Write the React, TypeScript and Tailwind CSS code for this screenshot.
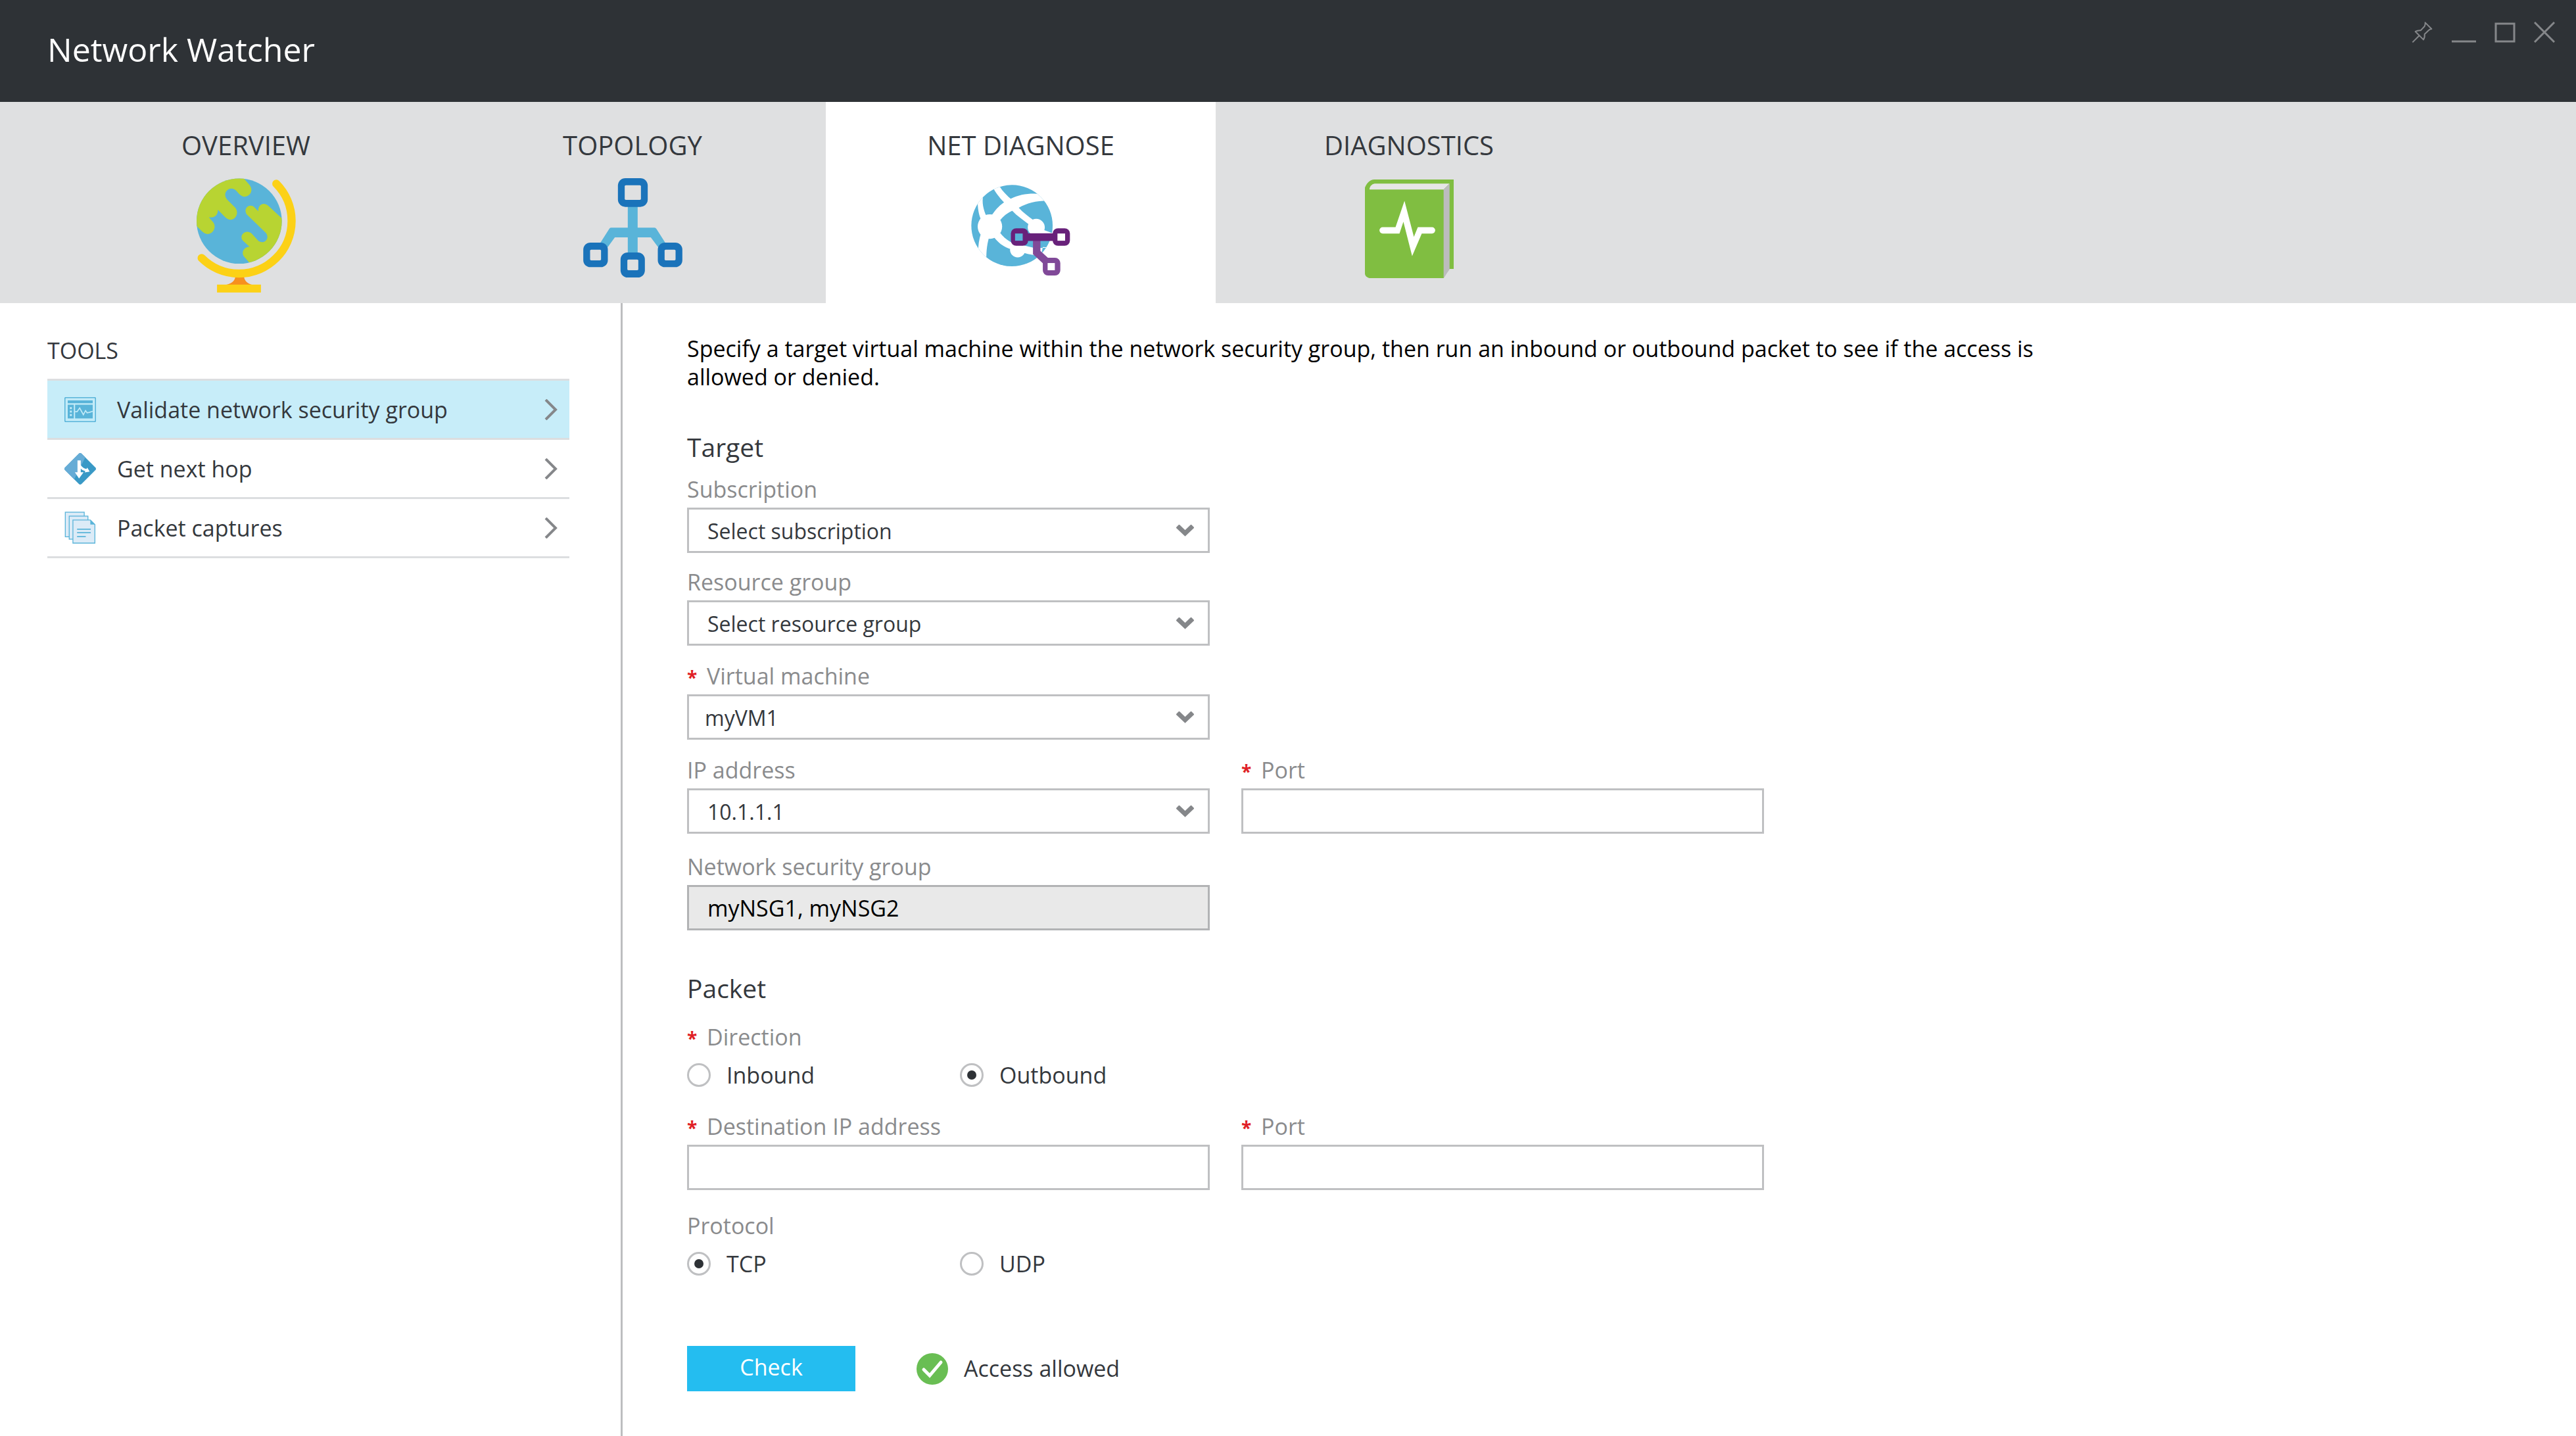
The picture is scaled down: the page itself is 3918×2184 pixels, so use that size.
import { useId, useState, type ReactNode } from "react";

const ICON_BLUE = "#59b4d9";

function GlobeIcon() {
  return (
    <svg viewBox="87 62 452 520" className="h-[174px] w-[151px]" aria-hidden="true">
      <defs>
        <clipPath id="globe-clip">
          <circle cx="281" cy="257" r="194" />
        </clipPath>
      </defs>
      <circle cx="281" cy="257" r="194" fill={ICON_BLUE} />
      <g clipPath="url(#globe-clip)" fill="#b8d432">
        <path d="M300 50 L305 66 L328 92 C348 118 330 145 305 146 C295 146 288 140 280 133 L268 119 C258 108 238 103 225 118 C213 132 216 147 226 159 L262 195 C280 214 270 248 243 251 C232 251 224 245 217 239 L184 205 C184 227 172 243 143 240 L160 259 C180 280 165 315 138 316 C126 315 120 311 113 305 L80 272 L60 60 Z" />
        <path d="M490 260 L475 244 L412 186 C392 168 366 182 368 212 L350 194 C330 174 297 198 315 226 L401 309 C424 334 395 366 368 347 L338 314 C312 290 277 322 298 346 L328 374 C300 375 288 403 305 421 L335 455 L420 460 L500 350 Z" />
      </g>
      <path d="M263 510 H303 C305 530 320 544 345 548 H215 C245 544 262 530 263 510 Z" fill="#f7901e" />
      <path d="M450 87 A239 239 0 0 1 110 425" fill="none" stroke="#fcd116" strokeWidth="37" strokeLinecap="round" />
      <rect x="180" y="546" width="200" height="36" fill="#fcd116" />
    </svg>
  );
}

function TopologyIcon() {
  return (
    <svg viewBox="46 36 452 453" className="h-[151px] w-[151px]" aria-hidden="true">
      <rect x="249" y="160" width="45" height="225" fill={ICON_BLUE} />
      <path d="M122 334 L165 266 Q168 262 174 262 H371 Q376 262 380 268 L422 334 L390 354 L354 306 H190 L155 354 Z" fill={ICON_BLUE} />
      <g fill="#1a73ba">
        <rect x="204" y="36" width="136" height="131" rx="34" />
        <rect x="46" y="330" width="112" height="112" rx="32" />
        <rect x="216" y="375" width="111" height="114" rx="32" />
        <rect x="386" y="330" width="112" height="112" rx="32" />
      </g>
      <g fill="#dfe0e1">
        <rect x="235" y="68" width="74" height="67" rx="5" />
        <rect x="77" y="362" width="50" height="49" rx="5" />
        <rect x="247" y="407" width="50" height="49" rx="5" />
        <rect x="417" y="362" width="50" height="49" rx="5" />
      </g>
    </svg>
  );
}

function NetDiagnoseIcon() {
  return (
    <svg viewBox="53 65 452 415" className="h-[138px] w-[151px]" aria-hidden="true">
      <defs>
        <clipPath id="net-clip">
          <circle cx="239" cy="252" r="186" />
        </clipPath>
      </defs>
      <circle cx="239" cy="252" r="186" fill={ICON_BLUE} />
      <g clipPath="url(#net-clip)" fill="#ffffff">
        <circle cx="138" cy="256" r="56" />
        <circle cx="350" cy="260" r="39" />
        <circle cx="265" cy="362" r="35" />
        <path d="M140 215 C170 165 205 140 235 128 C280 106 340 100 400 112 L400 138 C350 138 305 150 270 170 C235 184 205 200 186 226 Z" />
        <path d="M150 75 L180 68 C196 96 214 112 234 130 L270 170 C290 192 312 208 336 226 L316 246 C290 226 262 208 240 184 L206 150 C186 128 168 108 150 75 Z" />
        <path d="M82 140 L108 112 C100 145 108 178 122 208 L98 226 C86 200 82 170 82 140 Z" />
        <path d="M98 284 L136 300 C126 330 121 365 122 410 L84 380 C84 345 88 315 98 284 Z" />
        <path d="M158 306 L186 286 C202 308 222 322 246 334 L234 360 C202 350 176 330 158 306 Z" />
        <path d="M290 342 L340 354 H440 L380 350 L372 388 C345 388 318 384 292 376 Z" />
        <path d="M372 276 L384 272 L440 292 V300 H372 Z" />
      </g>
      <path d="M352 318 V375 L400 419" fill="none" stroke="#804998" strokeWidth="34" />
      <rect x="380" y="399" width="80" height="81" rx="24" fill="#804998" />
      <rect x="402" y="423" width="33" height="33" fill="#ffffff" />
      <g fill="#68217a">
        <rect x="290" y="287" width="150" height="35" />
        <rect x="234" y="264" width="79" height="80" rx="24" />
        <rect x="425" y="264" width="79" height="80" rx="24" />
      </g>
      <rect x="253" y="288" width="35" height="33" fill={ICON_BLUE} />
      <rect x="447" y="288" width="35" height="33" fill="#ffffff" />
    </svg>
  );
}

function DiagnosticsIcon() {
  return (
    <svg viewBox="41 41 406 451" className="h-[150px] w-[135px]" aria-hidden="true">
      <path d="M41 78 C50 58 62 41 85 41 H447 V450 H425 L401 492 H62 C48 488 41 480 41 470 Z" fill="#80be41" />
      <path d="M62 82 C66 68 76 60 90 60 H428 L401 87 H66 C62 87 62 85 62 82 Z" fill="#e6e6e6" />
      <path d="M428 60 V452 L401 491 V87 Z" fill="#bcbcbe" />
      <path d="M122 259 H181 L222 139 L265 303 L283 259 H348 A14 14 0 0 1 348 288 H301 L257 391 L217 234 L199 288 H122 A14 14 0 0 1 122 259 Z" fill="#ffffff" />
    </svg>
  );
}

function ValidateIcon() {
  return (
    <svg viewBox="53 66 145 115" className="h-[38px] w-12" aria-hidden="true">
      <rect x="55" y="68" width="141" height="111" rx="5" fill="#c3ebf8" stroke={ICON_BLUE} strokeWidth="5" />
      <rect x="68" y="81" width="115" height="13" fill={ICON_BLUE} />
      <rect x="68" y="101" width="28" height="63" fill={ICON_BLUE} />
      <rect x="102" y="101" width="81" height="63" fill={ICON_BLUE} />
      <g fill="#c3ebf8">
        <rect x="78" y="112" width="9" height="9" />
        <rect x="78" y="128" width="9" height="9" />
        <rect x="78" y="144" width="9" height="9" />
      </g>
      <polyline points="102,133 111,133 123,116 140,147 150,128 157,138 168,136 183,131" fill="none" stroke="#c3ebf8" strokeWidth="5" />
    </svg>
  );
}

function NextHopIcon() {
  return (
    <svg viewBox="53 326 145 145" className="size-12" aria-hidden="true">
      <path d="M120 328 Q125 324 131 328 L196 393 Q200 399 196 404 L131 469 Q125 473 120 469 L55 404 Q51 399 55 393 Z" fill="#3999c6" />
      <path d="M120 328 Q125 324 131 328 L149 346 L98 447 L55 404 Q51 399 55 393 Z" fill="#66acd6" />
      <path d="M113 360 H128 V382 C134 391 143 397 154 399 L158 393 L169 411 L146 415 L149 409 C140 407 133 403 128 398 V414 H141 L120 443 L101 414 H113 Z" fill="#ffffff" />
    </svg>
  );
}

function PacketIcon() {
  return (
    <svg viewBox="53 593 145 148" className="h-[49px] w-12" aria-hidden="true">
      <g fill="#dcebf7" stroke={ICON_BLUE} strokeWidth="4">
        <rect x="57" y="596" width="87" height="113" />
        <rect x="75" y="614" width="86" height="106" />
        <path d="M92 632 H172 L193 653 V738 H92 Z" />
      </g>
      <path d="M172 632 V653 H193 Z" fill={ICON_BLUE} />
      <path d="M111 674 H174 M111 690 H174 M111 708 H151" stroke={ICON_BLUE} strokeWidth="5" />
    </svg>
  );
}

function TitleBar() {
  return (
    <header className="flex h-[155px] items-start justify-between bg-[#2e3236] pl-[72px] pr-8 pt-[33px]">
      <h1 className="pt-1 text-[50px] leading-[76px] text-white">Network Watcher</h1>
      <div className="flex gap-7 text-[#85878a]">
        <button type="button" aria-label="Pin" className="h-8 w-8">
          <svg viewBox="208 97 96 96" className="size-8" fill="none" stroke="currentColor" strokeWidth="6" strokeLinejoin="round">
            <path d="M270 101 L299 130 Q291 131 286 136 L267 154 Q269 168 262 179 L225 142 Q236 136 249 137 L267 118 Q271 110 270 101 Z" />
            <path d="M243 160 L212 191" />
          </svg>
        </button>
        <button type="button" aria-label="Minimize" className="h-8 w-[38px]">
          <svg viewBox="0 0 38 32" className="h-8 w-[38px]" fill="none" stroke="currentColor" strokeWidth="3">
            <path d="M1 30 H38" />
          </svg>
        </button>
        <button type="button" aria-label="Maximize" className="h-8 w-8">
          <svg viewBox="0 0 32 32" className="size-8" fill="none" stroke="currentColor" strokeWidth="3">
            <rect x="2" y="3" width="28" height="27" />
          </svg>
        </button>
        <button type="button" aria-label="Close" className="h-8 w-8">
          <svg viewBox="0 0 32 32" className="size-8" fill="none" stroke="currentColor" strokeWidth="3">
            <path d="M1 1 L31 31 M31 1 L1 31" />
          </svg>
        </button>
      </div>
    </header>
  );
}

const TABS = [
  { label: "OVERVIEW", icon: <GlobeIcon />, pad: "pt-0" },
  { label: "TOPOLOGY", icon: <TopologyIcon />, pad: "pt-0" },
  { label: "NET DIAGNOSE", icon: <NetDiagnoseIcon />, pad: "pt-2.5" },
  { label: "DIAGNOSTICS", icon: <DiagnosticsIcon />, pad: "pt-0.5" },
];

function TabStrip() {
  const [active, setActive] = useState("NET DIAGNOSE");
  return (
    <nav className="flex h-[306px] bg-[#dfe0e1] pl-20">
      {TABS.map((tab) => (
        <button
          key={tab.label}
          type="button"
          onClick={() => setActive(tab.label)}
          aria-pressed={active === tab.label}
          className={`flex flex-col items-center pt-9 text-[#34383d] ${active === tab.label ? "w-[593px] bg-white" : "w-[588px]"}`}
        >
          <span className="text-[40px] leading-[60px]">{tab.label}</span>
          <span className={`mt-5 ${tab.pad}`}>{tab.icon}</span>
        </button>
      ))}
    </nav>
  );
}

const TOOLS = [
  { label: "Validate network security group", icon: <ValidateIcon /> },
  { label: "Get next hop", icon: <NextHopIcon /> },
  { label: "Packet captures", icon: <PacketIcon /> },
];

function Sidebar() {
  const [active, setActive] = useState(0);
  return (
    <aside className="w-[947px] shrink-0 border-r-[3px] border-[#bdbec0] pl-[72px] pr-[78px] pt-[50px]">
      <h2 className="text-[34px] leading-[45px] text-[#34383d]">TOOLS</h2>
      <ul className="mt-5 border-t-[3px] border-[#dcdee0]">
        {TOOLS.map((tool, i) => (
          <li key={tool.label} className="border-b-[3px] border-[#dcdee0]">
            <button
              type="button"
              onClick={() => setActive(i)}
              className={`flex h-[87px] w-full items-center pl-[26px] pr-[18px] text-left ${active === i ? "bg-[#c7edf9]" : ""}`}
            >
              {tool.icon}
              <span className="ml-8 grow pt-0.5 text-[34px] text-[#34383d]">{tool.label}</span>
              <svg viewBox="0 0 20 32" className="h-8 w-5" fill="none" stroke="#85878a" strokeWidth="4" aria-hidden="true">
                <path d="M2 1 L17 16 L2 31" />
              </svg>
            </button>
          </li>
        ))}
      </ul>
    </aside>
  );
}

function LabelText({ required, children }: { required?: boolean; children: ReactNode }) {
  return (
    <>
      {required && <span className="inline-block w-[30px] text-[28px] font-bold leading-none text-[#e01f26]">*</span>}
      {children}
    </>
  );
}

const LABEL = "block text-[34px] leading-[48px] text-[#8a8b8d]";
const BOX = "h-[69px] w-full border-[3px] bg-white text-[32px] border-[#bfc0c2] text-[#34383d]";

function SelectField({ label, required, options, pad }: { label: string; required?: boolean; options: string[]; pad: string }) {
  const id = useId();
  return (
    <div className="w-[795px]">
      <label htmlFor={id} className={LABEL}>
        <LabelText required={required}>{label}</LabelText>
      </label>
      <div className="relative mt-1">
        <select id={id} className={`${BOX} appearance-none pt-0.5 ${pad}`}>
          {options.map((o) => (
            <option key={o}>{o}</option>
          ))}
        </select>
        <svg viewBox="0 0 27 18" className="pointer-events-none absolute right-6 top-[26px] h-[18px] w-[27px]" fill="none" stroke="#85878a" strokeWidth="7" aria-hidden="true">
          <path d="M2 2 L13.500 13 L25 2" />
        </svg>
      </div>
    </div>
  );
}

function TextField({ label, required, value, readOnly }: { label: string; required?: boolean; value?: string; readOnly?: boolean }) {
  const id = useId();
  return (
    <div className="w-[795px]">
      <label htmlFor={id} className={LABEL}>
        <LabelText required={required}>{label}</LabelText>
      </label>
      {readOnly ? (
        <input id={id} readOnly value={value} className="mt-1 block h-[69px] w-full border-[3px] border-[#b2b3b5] bg-[#e9e9e9] pl-7 text-[34px] text-black" />
      ) : (
        <input id={id} defaultValue={value} className={`${BOX} mt-1 block pl-7`} />
      )}
    </div>
  );
}

function RadioGroup({ legend, required, name, options, initial }: { legend: string; required?: boolean; name: string; options: string[]; initial: string }) {
  const [value, setValue] = useState(initial);
  return (
    <fieldset>
      <legend className={LABEL}>
        <LabelText required={required}>{legend}</LabelText>
      </legend>
      <div className="mt-2.5 flex">
        {options.map((o) => (
          <label key={o} className="flex w-[415px] items-center gap-6 text-[34px] leading-[48px] text-[#34383d]">
            <input
              type="radio"
              name={name}
              checked={value === o}
              onChange={() => setValue(o)}
              className="grid size-9 shrink-0 appearance-none place-content-center rounded-full border-[3px] border-[#bfc0c2] before:size-3.5 before:rounded-full checked:before:bg-[#2e3236]"
            />
            {o}
          </label>
        ))}
      </div>
    </fieldset>
  );
}

function DiagnoseForm() {
  return (
    <form className="grow pb-16 pl-[98px] pt-12" onSubmit={(e) => e.preventDefault()}>
      <p className="max-w-[2080px] text-[34px] leading-[43px] text-black">
        Specify a target virtual machine within the network security group, then run an inbound or outbound packet to see if the access is allowed or denied.
      </p>

      <h2 className="mt-[57px] text-[39px] leading-[56px] text-[#34383d]">Target</h2>
      <div className="mt-3">
        <SelectField label="Subscription" options={["Select subscription"]} pad="pl-7" />
      </div>
      <div className="mt-5">
        <SelectField label="Resource group" options={["Select resource group"]} pad="pl-7" />
      </div>
      <div className="mt-[22px]">
        <SelectField label="Virtual machine" required options={["myVM1"]} pad="pl-6" />
      </div>
      <div className="mt-[22px] flex gap-12">
        <SelectField label="IP address" options={["10.1.1.1"]} pad="pl-7" />
        <TextField label="Port" required />
      </div>
      <div className="mt-[26px]">
        <TextField label="Network security group" value="myNSG1, myNSG2" readOnly />
      </div>

      <h2 className="mt-[60px] text-[39px] leading-[56px] text-[#34383d]">Packet</h2>
      <div className="mt-[22px]">
        <RadioGroup legend="Direction" required name="direction" options={["Inbound", "Outbound"]} initial="Outbound" />
      </div>
      <div className="mt-[30px] flex gap-12">
        <TextField label="Destination IP address" required />
        <TextField label="Port" required />
      </div>
      <div className="mt-[30px]">
        <RadioGroup legend="Protocol" name="protocol" options={["TCP", "UDP"]} initial="TCP" />
      </div>

      <div className="mt-[101px] flex items-center">
        <button type="submit" className="h-[69px] w-[256px] bg-[#24bdf0] pb-1 text-[34px] text-white">
          Check
        </button>
        <svg viewBox="0 0 48 48" className="ml-[93px] size-12" aria-hidden="true">
          <circle cx="24" cy="24" r="24" fill="#69be53" />
          <path d="M11 25 L20 34 L37 14" fill="none" stroke="#ffffff" strokeWidth="5" strokeLinecap="round" />
        </svg>
        <output className="ml-6 text-[34px] text-[#34383d]">Access allowed</output>
      </div>
    </form>
  );
}

export default function App() {
  return (
    <div className="flex min-h-screen flex-col bg-white font-['Open_Sans','Noto_Sans',sans-serif]">
      <TitleBar />
      <TabStrip />
      <main className="flex grow">
        <Sidebar />
        <DiagnoseForm />
      </main>
    </div>
  );
}
